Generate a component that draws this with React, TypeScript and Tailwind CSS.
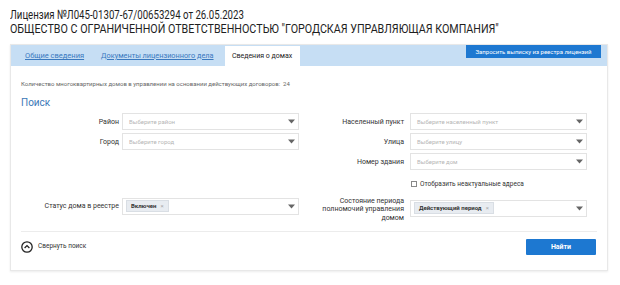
import React from "react";

const Arrow = () => (
  <svg width="7" height="5" viewBox="0 0 7 5" className="shrink-0">
    <path d="M0 0.5 L7 0.5 L3.5 4.5 Z" fill="#666" />
  </svg>
);

const Select = ({ placeholder, chip }: { placeholder?: string; chip?: string }) => (
  <div className="w-[177px] h-[17px] border border-[#e3e3e3] bg-white flex items-center pl-[3px] pr-[3px]">
    {chip ? (
      <div className="h-[12px] bg-[#e8ecf1] border border-[#d9dee4] flex items-center px-[4px] gap-[4px]">
        <span className="text-[6px] font-bold text-[#333] leading-none">{chip}</span>
        <span className="text-[6px] text-[#aaa] leading-none">×</span>
      </div>
    ) : (
      <span className="text-[6px] text-[#b5b5b5] leading-none pl-[3px]">{placeholder}</span>
    )}
    <div className="flex-1" />
    <Arrow />
  </div>
);

const Row = ({ label, labelW, gap, children }: { label: React.ReactNode; labelW: string; gap: string; children: React.ReactNode }) => (
  <div className={`flex items-center ${gap}`}>
    <div className={`${labelW} text-right text-[7px] text-[#333] leading-[8px]`}>{label}</div>
    {children}
  </div>
);

export default function App() {
  return (
    <div className="w-[620px] h-[285px] bg-white relative overflow-hidden" style={{ fontFamily: "Roboto, 'Noto Sans', sans-serif" }}>
      <div className="pt-[8px] pl-[10px] text-[#1e1e1e]">
        <div className="text-[13px] leading-[14px] origin-left scale-x-[0.742] whitespace-nowrap">Лицензия №Л045-01307-67/00653294 от 26.05.2023</div>
        <div className="text-[13px] leading-[14px] origin-left scale-x-[0.824] whitespace-nowrap">ОБЩЕСТВО С ОГРАНИЧЕННОЙ ОТВЕТСТВЕННОСТЬЮ "ГОРОДСКАЯ УПРАВЛЯЮЩАЯ КОМПАНИЯ"</div>
      </div>
      <div className="ml-[10px] mr-[12px] mt-[8px] border border-[#e8e8e8] shadow-[0_1px_2px_rgba(0,0,0,0.08)] h-[227px] flex flex-col">
        <div className="h-[21px] bg-[#c6def4] flex items-end pl-[14px] pr-[6px] relative">
          <div className="h-[20px] flex items-center text-[7.5px] text-[#3a79bf] underline">Общие сведения</div>
          <div className="h-[20px] flex items-center text-[7.3px] text-[#3a79bf] underline ml-[17px]">Документы лицензионного дела</div>
          <div className="h-[20px] w-[75px] bg-white flex items-center justify-center text-[7px] text-[#222] ml-[11px]">Сведения о домах</div>
          <div className="flex-1" />
          <div className="self-start mt-[0px] h-[13px] w-[135px] bg-[#1d78d1] text-white text-[6px] flex items-center justify-center">Запросить выписку из реестра лицензий</div>
        </div>
        <div className="px-[10px] flex-1 flex flex-col">
          <div className="mt-[14px] text-[6px] text-[#666] leading-[8px]">Количество многоквартирных домов в управлении на основании действующих договоров:&nbsp;&nbsp;24</div>
          <div className="mt-[9px] text-[10px] text-[#3b78b7] leading-[12px]">Поиск</div>
          <div className="flex mt-[4px]">
            <div className="w-[289px] flex flex-col gap-[3px]">
              <Row label="Район" labelW="w-[98px]" gap="gap-[3px]"><Select placeholder="Выберите район" /></Row>
              <Row label="Город" labelW="w-[98px]" gap="gap-[3px]"><Select placeholder="Выберите город" /></Row>
            </div>
            <div className="flex flex-col gap-[3px]">
              <Row label="Населенный пункт" labelW="w-[94px]" gap="gap-[6px]"><Select placeholder="Выберите населенный пункт" /></Row>
              <Row label="Улица" labelW="w-[94px]" gap="gap-[6px]"><Select placeholder="Выберите улицу" /></Row>
              <Row label="Номер здания" labelW="w-[94px]" gap="gap-[6px]"><Select placeholder="Выберите дом" /></Row>
              <div className="flex items-center ml-[101px] mt-[8px] gap-[3px]">
                <div className="w-[6px] h-[6px] border border-[#888] bg-white" />
                <span className="text-[6.5px] text-[#333] leading-none">Отобразить неактуальные адреса</span>
              </div>
            </div>
          </div>
          <div className="flex mt-[9px] items-start">
            <div className="w-[289px] flex items-center gap-[3px] mt-[1px]">
              <div className="w-[98px] text-right text-[7px] text-[#333] leading-[8px]">Статус дома в реестре</div>
              <Select chip="Включен" />
            </div>
            <div className="flex items-start gap-[6px]">
              <div className="w-[94px] text-right text-[7px] text-[#333] leading-[8.5px]">Состояние периода<br />полномочий управления<br />домом</div>
              <div className="mt-[3px]"><Select chip="Действующий период" /></div>
            </div>
          </div>
          <div className="mt-[9px] border-t border-[#ececec]" />
          <div className="flex items-center mt-[7px] pr-[1px]">
            <svg width="12" height="12" viewBox="0 0 12 12">
              <circle cx="6" cy="6" r="5.2" fill="none" stroke="#222" strokeWidth="1.3" />
              <path d="M3.6 7 L6 4.6 L8.4 7" fill="none" stroke="#222" strokeWidth="1.3" />
            </svg>
            <span className="ml-[5px] text-[6.5px] text-[#333]">Свернуть поиск</span>
            <div className="flex-1" />
            <div className="w-[70px] h-[16px] bg-[#1d78d1] rounded-[1px] text-white text-[7px] font-bold flex items-center justify-center">Найти</div>
          </div>
        </div>
      </div>
    </div>
  );
}
